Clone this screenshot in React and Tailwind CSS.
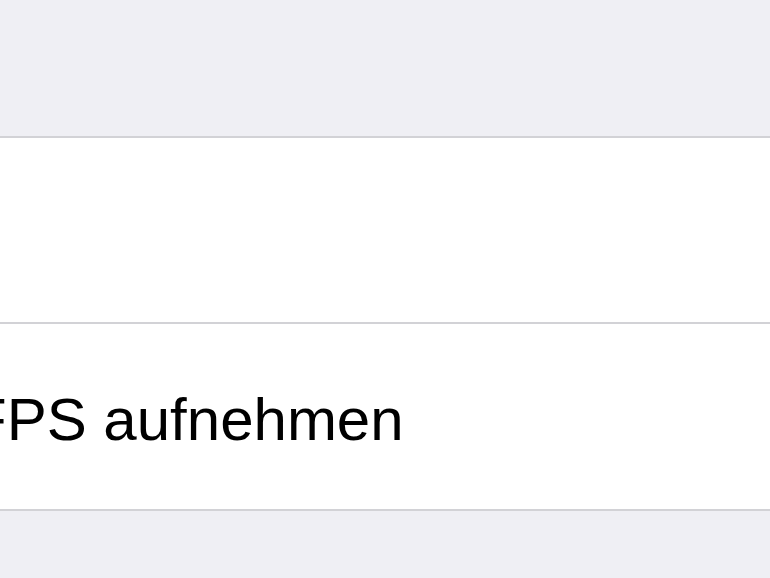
export default function App() {
  return (
    <div className="w-[770px] h-[578px] overflow-hidden bg-[#efeff4] flex flex-col" style={{ fontFamily: '"Liberation Sans", Arial, sans-serif' }}>
      <div className="h-[136px] shrink-0" />
      <div className="bg-white border-y-2 border-[#d2d2d6] shrink-0">
        <div className="h-[184px]" />
        <div className="h-[2px] bg-[#d2d2d6]" />
        <div className="h-[185px] flex items-center overflow-hidden">
          <span className="ml-[-30px] text-[60px] leading-[60px] text-black whitespace-nowrap pt-[7px]">FPS aufnehmen</span>
        </div>
      </div>
      <div className="flex-1" />
    </div>
  );
}
